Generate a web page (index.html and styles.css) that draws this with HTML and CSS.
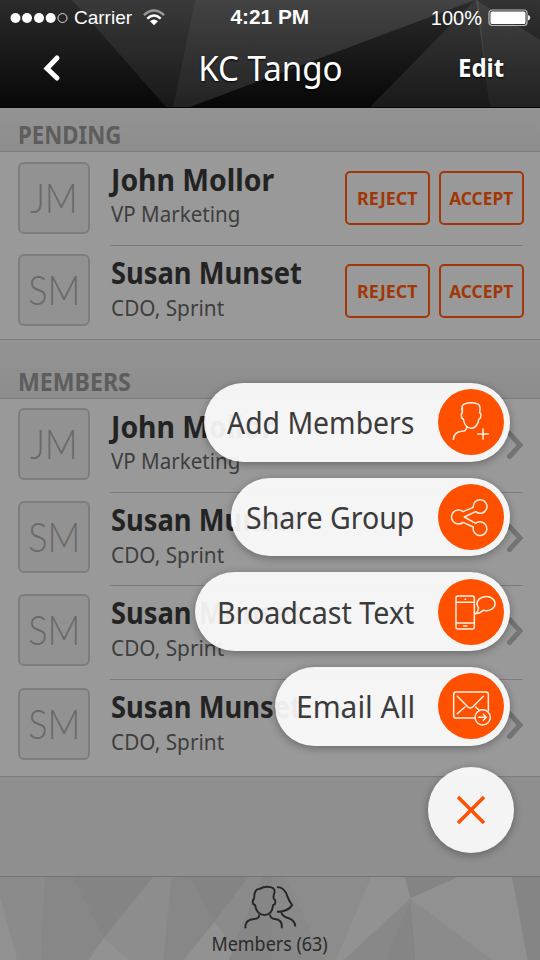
FILE: index.html
```html
<!DOCTYPE html>
<html lang="en">
<head>
<meta charset="utf-8">
<title>KC Tango</title>
<link rel="stylesheet" href="styles.css">
</head>
<body>
<div class="screen">
  <header class="top">
    <svg class="facets" viewBox="0 0 540 108" preserveAspectRatio="none" fill="#fff">
      <path d="M72 0H195L173 108H166Z" opacity=".07"/>
      <path d="M195 0H475L190 108H173Z" opacity=".115"/>
      <path d="M475 0L370 108H490L478 0Z" opacity=".075"/>
      <path d="M476 0L540 40V108H490Z" opacity=".11"/>
      <path d="M476 0H540V40Z" opacity=".04"/>
    </svg>
    <div class="status">
      <div class="carrier">
        <svg width="60" height="12" viewBox="0 0 60 12" fill="#fff"><circle cx="5.5" cy="6" r="5"/><circle cx="17" cy="6" r="5"/><circle cx="29" cy="6" r="5"/><circle cx="40.7" cy="6" r="5"/><circle cx="52.5" cy="6" r="4.5" fill="none" stroke="#ddd"/></svg>
        <span class="carrier-name">Carrier</span>
        <svg width="22" height="17" viewBox="0 0 22 17" fill="none" stroke="#fff" stroke-width="2.4"><path d="M.9 6.2Q11-3 21.100 6.200" stroke="#999"/><path d="M4.300 9.600Q11 3.600 17.700 9.600"/><path d="M11 16.200L7 12.200Q11 8.800 15 12.200Z" fill="#fff" stroke="none"/></svg>
      </div>
      <div class="clock"><span class="t-clock">4:21 PM</span></div>
      <div class="power">
        <span>100%</span>
        <svg width="43" height="18" viewBox="0 0 43 18"><rect x="1" y="1" width="38" height="15.500" rx="3" fill="none" stroke="#bbb" stroke-width="1.200"/><rect x="2.500" y="2.500" width="35" height="12.500" rx="1.500" fill="#fff"/><path d="M40 6Q42.300 6.500 42.300 8.700T40 11.500Z" fill="#eee"/></svg>
      </div>
    </div>
    <nav class="nav">
      <svg class="back" width="20" height="28" viewBox="0 0 20 28" fill="none" stroke="#fff" stroke-width="5" stroke-linecap="round"><path d="M16 4L6 14.500L16 24"/></svg>
      <h1><span class="t-title">KC Tango</span></h1>
      <a class="edit"><span class="t-edit">Edit</span></a>
    </nav>
  </header>

  <main class="content">
    <h2 class="head head-pending"><span class="t-pending">PENDING</span></h2>
    <ul class="list pending">
      <li class="row"><div class="avatar"><span class="jm">JM</span></div><div class="info"><b class="t-john">John Mollor</b><span class="t-vp">VP Marketing</span></div><div class="actions"><button><span class="t-rej">REJECT</span></button><button><span class="t-acc">ACCEPT</span></button></div></li>
      <li class="row"><div class="avatar"><span class="sm">SM</span></div><div class="info"><b class="t-susan">Susan Munset</b><span class="t-cdo">CDO, Sprint</span></div><div class="actions"><button><span class="t-rej">REJECT</span></button><button><span class="t-acc">ACCEPT</span></button></div></li>
    </ul>
    <h2 class="head head-members"><span class="t-members">MEMBERS</span></h2>
    <ul class="list members">
      <li class="row"><div class="avatar"><span class="jm">JM</span></div><div class="info"><b class="t-john">John Mollor</b><span class="t-vp">VP Marketing</span></div><svg class="chev" viewBox="0 0 18 30"><path d="M3.500 3.500L14 15L3.500 26.500"/></svg></li>
      <li class="row"><div class="avatar"><span class="sm">SM</span></div><div class="info"><b class="t-susan">Susan Munset</b><span class="t-cdo">CDO, Sprint</span></div><svg class="chev" viewBox="0 0 18 30"><path d="M3.500 3.500L14 15L3.500 26.500"/></svg></li>
      <li class="row"><div class="avatar"><span class="sm">SM</span></div><div class="info"><b class="t-susan">Susan Munset</b><span class="t-cdo">CDO, Sprint</span></div><svg class="chev" viewBox="0 0 18 30"><path d="M3.500 3.500L14 15L3.500 26.500"/></svg></li>
      <li class="row"><div class="avatar"><span class="sm">SM</span></div><div class="info"><b class="t-susan">Susan Munset</b><span class="t-cdo">CDO, Sprint</span></div><svg class="chev" viewBox="0 0 18 30"><path d="M3.500 3.500L14 15L3.500 26.500"/></svg></li>
    </ul>
  </main>

  <footer class="tabbar">
    <svg class="facets" viewBox="0 50 1568 250" preserveAspectRatio="none">
      <path d="M0 50H130L118 300H50L0 110Z" fill="#8b8b8b"/>
      <path d="M0 110L50 300H0Z" fill="#919191"/>
      <path d="M210 50H445L300 236Z" fill="#848484"/>
      <path d="M130 50H210L300 236L258 300H118Z" fill="#878787"/>
      <path d="M445 50H498L474 300H375L300 236Z" fill="#8d8d8d"/>
      <path d="M300 236L375 300H258Z" fill="#929292"/>
      <path d="M498 50H550L622 186L534 300H474Z" fill="#878787"/>
      <path d="M550 50H722L622 186Z" fill="#848484"/>
      <path d="M722 50H760L690 230L680 262L622 186Z" fill="#8b8b8b"/>
      <path d="M622 186L680 262L665 300H534Z" fill="#929292"/>
      <path d="M760 50H792V300H665L690 230Z" fill="#868686"/>
      <path d="M792 50H830L942 300H792Z" fill="#898989"/>
      <path d="M830 50H1078L975 300H942Z" fill="#8c8c8c"/>
      <path d="M1078 50H1175L1192 114L998 300H975Z" fill="#929292"/>
      <path d="M1175 50H1330L1192 114Z" fill="#848484"/>
      <path d="M1192 114L998 300H1120Z" fill="#888"/>
      <path d="M1192 114L1120 300H1207Z" fill="#858585"/>
      <path d="M1192 114L1430 300H1207Z" fill="#8b8b8b"/>
      <path d="M1330 50H1487L1532 300H1430L1192 114Z" fill="#919191"/>
      <path d="M1487 50H1568V300H1532Z" fill="#858585"/>
    </svg>
    <svg class="people" viewBox="705 70 156 130" fill="none" stroke="#262626" stroke-width="5.500" stroke-linejoin="round"><path d="M712 198V190Q714 173 737 171Q752 171 752 158M783 158Q784 170 797 171Q817 173 817 190V198"/><path d="M737 113Q737 84 753 84Q769 75 785 79Q800 83 795 98Q792 106 794 113Q801 117 797 128L792 131Q789 159 767 160Q744 158 740 131L735 128Q730 118 737 113Z"/><path d="M803 79Q824 78 833 105Q837 118 847 131Q834 151 803 150M815 151Q819 165 838 169Q856 176 856 193"/></svg>
    <span class="t-tab">Members (63)</span>
  </footer>

  <div class="menu">
    <a class="pill add"><span class="label"><span class="t-add">Add Members</span></span>
      <svg viewBox="24 29 198 198"><circle cx="123" cy="128" r="99"/><path d="M70 180Q72 158 95 156Q110 156 110 142M97 100Q92 78 103 74Q123 67 141 73Q154 76 149 100Q155 104 151 116L147 119Q141 147 123 147Q104 145 100 119L95 116Q92 104 97 100V80M159 149V180M143 164H175"/></svg></a>
    <a class="pill share"><span class="label"><span class="t-share">Share Group</span></span>
      <svg viewBox="24 312 198 198"><circle cx="123" cy="411" r="99"/><path d="M99 395L130 382A20.500 20.500 0 1 1 137 395L103 411L137 430A20.500 20.500 0 1 1 130 441L99 427A21 21 0 1 1 99 395Z"/></svg></a>
    <a class="pill text"><span class="label"><span class="t-text">Broadcast Text</span></span>
      <svg viewBox="24 27 198 198"><circle cx="123" cy="126" r="99"/><path d="M84 78H127Q133 78 133 84V171Q133 177 127 177H84Q78 177 78 171V84Q78 78 84 78ZM78 97H133M78 159H133M105 88H107M101 168H111M146 113A27 21 0 1 1 160 121Q150 131 137 131Q145 124 146 113Z"/></svg></a>
    <a class="pill mail"><span class="label"><span class="t-mail">Email All</span></span>
      <svg viewBox="24 310 198 198"><circle cx="123" cy="409" r="99"/><path d="M133 445H78Q71 445 71 438V374Q71 367 78 367H168Q175 367 175 374V423M82 380L114 412Q121 418 128 412L160 380M82 432L105 412M137 412L147 422"/><path d="M135 443A23 23 0 1 0 181 443A23 23 0 1 0 135 443ZM146 443H169M160 434L169 443L160 452"/></svg></a>
    <a class="close"><svg viewBox="0 0 30 30"><path d="M2 2L28 28M28 2L2 28"/></svg></a>
  </div>
</div>
</body>
</html>
```
FILE: styles.css
```css
* { box-sizing: border-box; }
body { margin: 0; font-family: "Noto Sans", "Open Sans", sans-serif; }
h1, h2, ul { margin: 0; padding: 0; font-weight: 400; }
ul { list-style: none; }
svg { display: block; flex: none; }
.screen { position: relative; width: 540px; height: 960px; overflow: hidden; background: #8f8f8f; display: flex; flex-direction: column; }

/* Labels are narrowed slightly; each scales from its own anchor edge. */
[class^="t-"] { display: inline-block; white-space: nowrap; transform-origin: 0 50%; }
.t-clock { transform: scaleX(1.04); }
.t-title { transform: scaleX(.945); }
.t-edit { transform: scaleX(.96); }
.t-pending { transform: scaleX(.888); }
.t-members { transform: scaleX(.925); }
.t-john { transform: scaleX(.945); }
.t-susan { transform: scaleX(.91); }
.t-vp { transform: scaleX(.955); }
.t-cdo { transform: scaleX(.967); }
.t-rej { transform: scaleX(.965); }
.t-acc { transform: scaleX(.935); }
.t-tab { transform: scaleX(.943); }
.t-add { transform: scaleX(.915); }
.t-share { transform: scaleX(.92); }
.t-text { transform: scaleX(.925); }
.t-mail { transform: scaleX(.965); }
.jm, .sm { transform: scaleX(.86); }

.top { position: relative; height: 108px; background: linear-gradient(#2b2b2b, #070707); color: #fff; border-bottom: 1px solid #050505; flex: none; }
.facets { position: absolute; inset: 0; width: 100%; height: 100%; }
.status { position: relative; height: 34px; display: grid; grid-template-columns: 180px 1fr 180px; font: 19px/34px "Liberation Sans", Arial, sans-serif; }
.carrier { display: flex; align-items: center; padding-left: 10px; }
.carrier-name { margin: 1px 11px 0 4px; }
.clock { text-align: center; font-weight: 700; font-size: 20px; }
.clock .t-clock { transform-origin: 50% 50%; }
.power { display: flex; align-items: center; justify-content: flex-end; gap: 6px; padding-right: 9px; font-size: 20px; }
.nav { position: relative; height: 70px; display: grid; grid-template-columns: 180px 1fr 180px; }
.back { margin: 20px 0 0 41px; }
.nav h1 { font-size: 35px; line-height: 68px; text-align: center; text-shadow: 0 1px 2px #000; }
.nav .t-title { transform-origin: 50% 50%; }
.edit { font-size: 25px; line-height: 67px; font-weight: 700; padding-left: 98px; text-shadow: 0 1px 2px #000; }

.content { flex: 1; }
.head { font-size: 25px; font-weight: 700; line-height: 32px; color: #5d5d5d; background: linear-gradient(#939393, #8d8d8d); border-bottom: 1px solid #7c7c7c; padding-left: 18px; }
.head-pending { height: 44px; padding-top: 10px; }
.head-members { height: 59px; padding-top: 25px; }
.list { background: #999; border-bottom: 1px solid #7c7c7c; }
.pending { height: 188px; padding-top: 1px; }
.members { height: 378px; }
.row { display: flex; align-items: flex-start; height: 94px; margin: 0 17px 0 18px; padding-top: 9px; background: linear-gradient(#7c7c7c, #7c7c7c) 92px 100% / 100% 1px no-repeat; }
.pending .row:first-child, .members .row:nth-child(2) { height: 93px; }
.row + .row { padding-top: 8px; }
.row:last-child { background: none; }
.avatar { width: 72px; height: 72px; border: 2px solid #7d7d7d; border-radius: 6px; background: #929292; color: #696969; display: flex; justify-content: center; font: 300 42px/67px Lato, "Open Sans", sans-serif; }
.info { flex: 1; display: flex; flex-direction: column; align-items: flex-start; margin: -1px 0 0 21px; }
.info b { font-size: 30px; line-height: 39px; color: #232323; }
.info span { font-size: 21.5px; line-height: 30px; color: #3e3e3e; }
.pending .info b { line-height: 38px; }
.row + .row .info { margin-top: 0; }
.pending .row + .row .info b { line-height: 39px; }
.row + .row .info b { margin-top: -1px; margin-bottom: 1px; }
.actions { display: flex; gap: 9px; margin: 9px -1px 0 0; }
.row + .row .actions { margin-top: 10px; }
.actions button { width: 85px; height: 54px; padding: 0; background: none; border: 2px solid #a23606; border-radius: 5px; color: #a23606; font: 700 18.500px/50px "Noto Sans", sans-serif; display: flex; justify-content: center; }
.actions .t-rej, .actions .t-acc { transform-origin: 50% 50%; }
.chev { width: 18px; height: 30px; margin-top: 22px; margin-right: -1px; fill: none; stroke: #747474; stroke-width: 5; stroke-linecap: round; }

.tabbar { position: relative; height: 84px; border-top: 1px solid #737373; display: flex; flex-direction: column; align-items: center; flex: none; }
.people { position: relative; width: 54px; height: 45px; margin-top: 7px; }
.tabbar .t-tab { position: relative; font-size: 19px; line-height: 26px; margin-top: 2px; color: #2b2b2b; transform-origin: 50% 50%; }

.menu { position: absolute; top: 383px; right: 30px; display: flex; flex-direction: column; align-items: flex-end; gap: 16px; }
.pill { height: 78.700px; border-radius: 40px; background: rgba(252,252,252,.93); box-shadow: 0 2px 9px rgba(0,0,0,.32); display: flex; justify-content: space-between; align-items: center; padding-right: 6px; color: #3b3b3b; }
.pill .label { font-size: 31px; line-height: 78px; width: 100px; }
.pill svg { width: 66px; height: 66px; fill: none; stroke: #fff0e5; stroke-width: 4.500; stroke-linecap: round; stroke-linejoin: round; }
.pill circle { fill: #ff5000; stroke: none; }
.add { width: 306px; padding-left: 23px; }
.share { width: 279px; padding-left: 15px; }
.text { width: 315px; padding-left: 22px; }
.mail { width: 235px; padding-left: 21px; }
.close { width: 86px; height: 86px; margin: 5px -4px 0 0; border-radius: 50%; background: rgba(252,252,252,.93); box-shadow: 0 2px 9px rgba(0,0,0,.32); display: flex; align-items: center; justify-content: center; }
.close svg { width: 30px; height: 30px; fill: none; stroke: #ff5000; stroke-width: 3.500; }
```
